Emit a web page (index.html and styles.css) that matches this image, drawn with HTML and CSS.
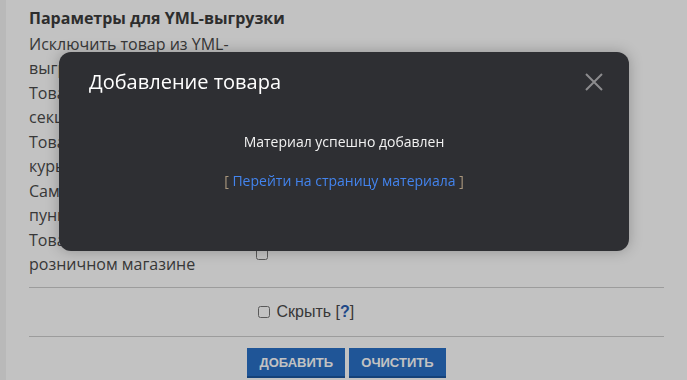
FILE: index.html
```html
<!DOCTYPE html>
<html>
<head>
    <title>Добавление товара</title>
    <link rel="stylesheet" href="styles.css">
</head>
<body>
    <div class="page">
        <h3 class="params-title">Параметры для YML-выгрузки</h3>
        <table class="params">
            <tr>
                <td class="label">Исключить товар из YML-выгрузки</td>
                <td class="field"><input type="checkbox"></td>
            </tr>
            <tr>
                <td class="label">Товар доступен только в секции</td>
                <td class="field"><input type="checkbox"></td>
            </tr>
            <tr>
                <td class="label">Товар можно доставить курьером</td>
                <td class="field"><input type="checkbox"></td>
            </tr>
            <tr>
                <td class="label">Самовывоз из магазина и пункта выдачи</td>
                <td class="field"><input type="checkbox"></td>
            </tr>
            <tr>
                <td class="label">Товар можно купить в розничном магазине</td>
                <td class="field"><input type="checkbox"></td>
            </tr>
        </table>

        <div class="hide-row">
            <div class="hide-field">
                <input type="checkbox"> Скрыть <span class="hint">[<a href="#">?</a>]</span>
            </div>
        </div>

        <div class="actions">
            <button class="btn">Добавить</button>
            <button class="btn">Очистить</button>
        </div>
    </div>

    <div class="overlay"></div>

    <div class="modal">
        <div class="modal-header">
            <h2 class="modal-title">Добавление товара</h2>
            <span class="modal-close">
                <svg width="18" height="18" viewBox="0 0 18 18">
                    <path d="M1 1 L17 17 M17 1 L1 17" stroke="#8c8c8e" stroke-width="2" fill="none"/>
                </svg>
            </span>
        </div>
        <div class="modal-body">
            <p class="message">Материал успешно добавлен</p>
            <p class="message-link"><span class="bracket">[</span> <a href="#">Перейти на страницу материала</a> <span class="bracket">]</span></p>
        </div>
    </div>
</body>
</html>
```

FILE: styles.css
```css
body {
    margin: 0;
    background-color: #f3f3f3;
    font-family: 'Open Sans', sans-serif;
}

.page {
    margin-left: 6px;
    min-height: 380px;
    background-color: #fff;
    padding: 6px 23px 0 23px;
    color: #4a4a4a;
}

.params-title {
    margin: 0 0 2px 0;
    font-size: 16px;
    line-height: 24px;
    font-weight: bold;
    color: #3c3c3c;
}

.params {
    border-collapse: separate;
    border-spacing: 0 1px;
    margin-top: -1px;
}

.params td {
    padding: 0;
    vertical-align: middle;
}

.params .label {
    width: 223px;
    font-size: 16px;
    line-height: 24px;
}

.params input[type="checkbox"],
.hide-field input[type="checkbox"] {
    width: 12px;
    height: 12px;
    margin: 0 0 0 4px;
    vertical-align: middle;
}

.hide-row {
    margin-top: 10px;
    height: 48px;
    border-top: 1px solid #cdcdcd;
    border-bottom: 1px solid #cdcdcd;
    display: flex;
    align-items: center;
}

.hide-field {
    margin-left: 224px;
    font-family: 'Liberation Sans', Arial, sans-serif;
    font-size: 16px;
    color: #4a4a4a;
}

.hide-field input[type="checkbox"] {
    margin: 0 2px 2px 5px;
}

.hint a {
    color: #2b5fb3;
    font-weight: bold;
    text-decoration: none;
}

.actions {
    margin-top: 11px;
    text-align: center;
}

.btn {
    height: 30px;
    padding: 0 12px;
    margin: 0 0 0 0;
    border: none;
    border-bottom: 2px solid #1c57a0;
    background-color: #2970c7;
    color: #fff;
    font-family: 'Liberation Sans', Arial, sans-serif;
    font-size: 13px;
    font-weight: bold;
    text-transform: uppercase;
}

.overlay {
    position: fixed;
    top: 0;
    left: 0;
    right: 0;
    bottom: 0;
    background-color: rgba(0, 0, 0, 0.24);
}

.modal {
    position: fixed;
    top: 52px;
    left: 59px;
    width: 570px;
    height: 199px;
    background-color: #2e2f33;
    border-radius: 12px;
    box-shadow: 0 0 14px rgba(0, 0, 0, 0.25);
    color: #f2f2f2;
}

.modal-header {
    display: flex;
    align-items: center;
    justify-content: space-between;
    padding: 15px 26px 0 30px;
    height: 30px;
}

.modal-title {
    margin: 0;
    font-size: 20px;
    line-height: 30px;
    font-weight: normal;
    color: #fff;
}

.modal-close {
    width: 18px;
    height: 18px;
    display: flex;
}

.modal-body {
    padding-top: 35px;
    text-align: center;
}

.message {
    margin: 0 0 19px 0;
    font-size: 14px;
    line-height: 20px;
}

.message-link {
    margin: 0;
    font-size: 14px;
    line-height: 20px;
}

.message-link a {
    color: #4384ee;
    text-decoration: none;
}

.bracket {
    color: #a8957c;
}
```
